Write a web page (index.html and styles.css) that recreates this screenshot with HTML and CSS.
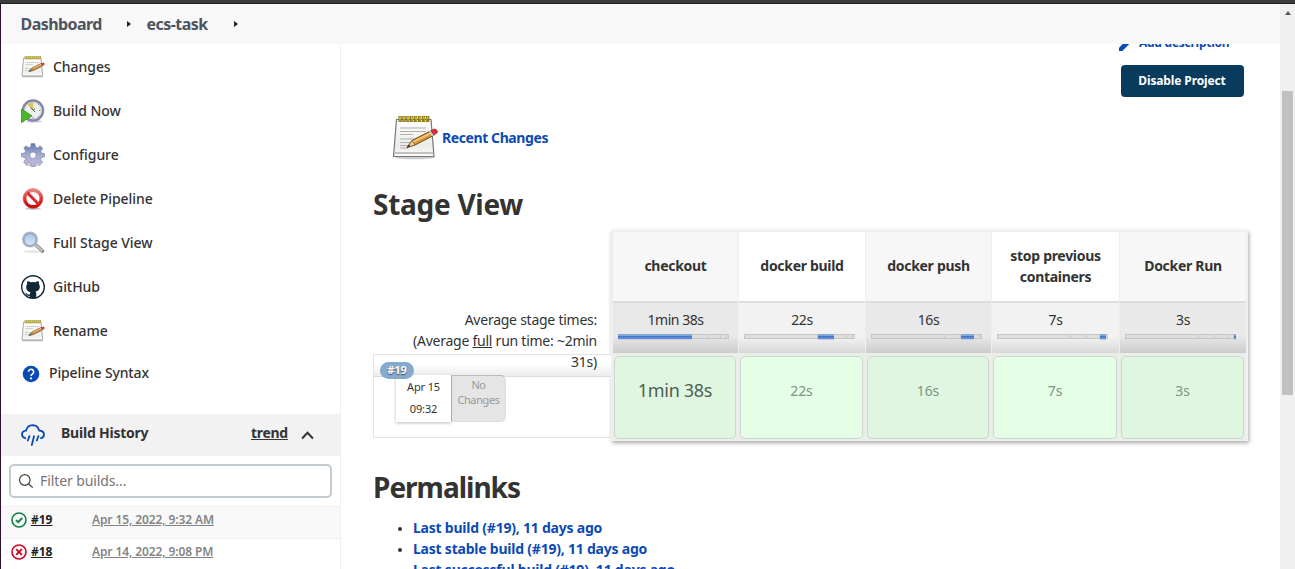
FILE: index.html
```html
<!DOCTYPE html>
<html lang="en">
<head>
<meta charset="utf-8">
<title>ecs-task [Jenkins]</title>
<link rel="stylesheet" href="styles.css">
</head>
<body>
<svg width="0" height="0" class="defs" aria-hidden="true">
  <defs>
    <linearGradient id="paper" x1="0" y1="0" x2="0" y2="1"><stop offset="0" stop-color="#fff"/><stop offset=".7" stop-color="#ececea"/><stop offset="1" stop-color="#fafafa"/></linearGradient>
    <linearGradient id="steel" x1="0" y1="0" x2="0" y2="1"><stop offset="0" stop-color="#5f7cab"/><stop offset=".5" stop-color="#a5acd0"/><stop offset="1" stop-color="#c3bbda"/></linearGradient>
    <linearGradient id="red" x1="0" y1="0" x2="0" y2="1"><stop offset="0" stop-color="#e98484"/><stop offset=".6" stop-color="#dd2a2a"/><stop offset="1" stop-color="#c40c10"/></linearGradient>
    <linearGradient id="lens" x1="0" y1="0" x2="0" y2="1"><stop offset="0" stop-color="#a3c4ea"/><stop offset="1" stop-color="#dcecfb"/></linearGradient>
    <symbol id="notepad" viewBox="0 0 48 48">
      <ellipse cx="23" cy="44.500" rx="20" ry="1.800" fill="#ccc"/>
      <path d="M4.500 6.500H39L42 43.500H1.500Z" fill="url(#paper)" stroke="#777" stroke-width="1.200" stroke-linejoin="round"/>
      <path d="M2.500 40H41.500" stroke="#b0b0ae" stroke-width="1.500"/>
      <path d="M8 15H34M8 18.500H34M8 21.500H21M8 26H32M8 29.500H26M8 32.500H22M8 35H16" stroke="#aeb0ae" stroke-width="1.100"/>
      <path d="M6.500 6H38" stroke="#6d5d08" stroke-width="6" stroke-dasharray="3.200 .7"/>
      <path d="M7.200 6H38" stroke="#dcc640" stroke-width="5" stroke-dasharray="2 1.900"/>
      <path d="M7.800 7H38" stroke="#705f0c" stroke-width="2.500" stroke-dasharray=".8 3.100"/>
      <path d="M15 34.500L20 27.500L38.500 18L41.500 22.500L23 32Z" fill="#d69a3b" stroke="#6e4715"/>
      <path d="M21 29L39 20" stroke="#f3c779" stroke-width="1.600"/>
      <path d="M15 34.500L20 27.500L23 32Z" fill="#e6c99c" stroke="#6e4715" stroke-width=".6"/>
      <path d="M15 34.500L17 31.500L18.200 33.300Z" fill="#222"/>
      <path d="M37 18.700L40 23.200L42 22L39 17.500Z" fill="#ccc"/>
      <path d="M39 17.700L42 16Q45.500 16 45.500 19.500L42 22Z" fill="#e02d32" stroke="#8e2025" stroke-width=".7"/>
    </symbol>
    <symbol id="notepad-small" viewBox="0 0 24 24">
      <path d="M2.500 3H20L21.700 21H1Z" fill="url(#paper)" stroke="#a5a5a3" stroke-width=".9"/>
      <path d="M1.300 21.500H22" stroke="#b4b4b2" stroke-width="1.500"/>
      <path d="M4.500 7.500H17.500M4.500 9.500H12M4 13.500H11M4 15.500H8" stroke="#d0d1d0"/>
      <path d="M3.500 2.700H20" stroke="#b4a84a" stroke-width="3.200"/>
      <path d="M4 2.200H20" stroke="#ddd06b" stroke-width="1.500" stroke-dasharray="1 1"/>
      <path d="M8 16.500L11 13L21 8L22 10.500L12.500 15.500Z" fill="#c88f42" stroke="#745023" stroke-width=".7"/>
      <path d="M12 13.500L20 9.500" stroke="#f0c77c"/>
      <path d="M8 16.500L9.400 14.800L10.200 16Z" fill="#333"/>
      <path d="M20 8.500L22.500 7.500Q24 8.500 23.500 9.700L21.500 10.700Z" fill="#dc343a"/>
    </symbol>
  </defs>
</svg>
<div class="window">
  <div class="chrome"></div>
  <div class="viewport">
    <div class="page">
      <nav class="crumbs">
        <a class="crumb crumb-root">Dashboard</a><i class="caret"></i><a class="crumb crumb-job">ecs-task</a><i class="caret"></i>
      </nav>
      <div class="columns">
        <aside class="side">
          <div class="task"><svg class="ico"><use href="#notepad-small"/></svg><span>Changes</span></div>
          <div class="task"><svg class="ico" viewBox="0 0 24 24">
            <ellipse cx="13" cy="22.300" rx="8" ry="1.200" fill="#ccc"/>
            <circle cx="12" cy="11.500" r="10" fill="#eef0ee" stroke="#8585a8" stroke-width="2.400"/>
            <circle cx="12" cy="11.500" r="8.300" fill="none" stroke="#cfd0dd"/>
            <path d="M12 11.500L6.500 5.500Q9 3 12.500 3.500Z" fill="#dfc45c"/>
            <path d="M9.500 8.500L12.500 11.500L13.500 9.500M12.500 11.500L14 13" stroke="#555" stroke-width="1" fill="none"/>
            <path d="M18 11.500H19.500M12 18V19.500M17 6l.7-.7M17 17l.7.7" stroke="#888"/>
            <path d="M.5 10L11 16.800L.5 23.700Z" fill="#4db528" stroke="#3d942a" stroke-width=".8"/></svg><span>Build Now</span></div>
          <div class="task"><svg class="ico" viewBox="0 0 24 24">
            <ellipse cx="12" cy="22" rx="8" ry="1.300" fill="#ccc"/>
            <path fill-rule="evenodd" fill="url(#steel)" stroke="#7c83ab" stroke-width=".7" d="M10.200.6h3.600l.7 3.500 1.800.8 3-2 2.400 2.500-2 2.900.7 1.800 3.100.6v3l-3.300.8-.7 1.700 2 3-2.400 2.400-3-2-1.600.7-.7 3.200h-3.300l-.8-3.200-1.800-.8-2.900 2-2.300-2.400 1.900-2.900-.7-1.700L.5 13.700v-3.200l3.500-.7.7-1.800-1.900-2.900L5 2.900l3 1.900 1.600-.7zM12 9a3.200 3.200 0 1 0 0 6.400A3.200 3.200 0 1 0 12 9z"/></svg><span>Configure</span></div>
          <div class="task"><svg class="ico" viewBox="0 0 24 24">
            <ellipse cx="12" cy="21.700" rx="8" ry="1.200" fill="#ccc"/>
            <circle cx="12" cy="11.500" r="8.300" fill="#fff" stroke="url(#red)" stroke-width="3.400"/>
            <path d="M6.300 5.800L17.700 17.200" stroke="#dc2b2d" stroke-width="3"/>
            <circle cx="12" cy="11.500" r="10" fill="none" stroke="#c8595b" stroke-width=".5"/></svg><span>Delete Pipeline</span></div>
          <div class="task"><svg class="ico" viewBox="0 0 24 24">
            <ellipse cx="12" cy="20.500" rx="10" ry="1.500" fill="#e7e7e7"/>
            <path d="M14.500 13.500L21.500 20" stroke="#858585" stroke-width="3.600" stroke-linecap="round"/>
            <path d="M14.500 13.500L21.500 20" stroke="#c4c4c2" stroke-width="2"/>
            <circle cx="9" cy="8.500" r="6.900" fill="url(#lens)" stroke="#b4b8c0" stroke-width="2.200"/>
            <circle cx="9" cy="8.500" r="6" fill="none" stroke="#6a90c0" stroke-width=".7"/></svg><span>Full Stage View</span></div>
          <div class="task"><svg class="ico" viewBox="0 0 24 24">
            <circle cx="12" cy="12" r="11.300" fill="#fff" stroke="#142b3a" stroke-width="1.400"/>
            <path fill="#102838" d="M6.300 6.200q1.500-.2 3.300 1.100 2.400-.6 4.800 0 1.800-1.300 3.300-1.100.5 1.300.1 2.500 1.300 1.500 1 3.600-.4 3.700-4.300 4.100.8.800.8 2.300V23.300H8.700V20.800Q6 21.300 5 18.900l-1-1.200q1.300-.2 2.300 1.200 1 1 2.500.5.100-1.600.8-2.200-4-.6-4.400-4.200-.3-2.400 1-3.900-.5-1.400.1-2.900z"/></svg><span>GitHub</span></div>
          <div class="task"><svg class="ico"><use href="#notepad-small"/></svg><span>Rename</span></div>
          <div class="task task-help"><svg class="ico-help" viewBox="0 0 18 18"><circle cx="9" cy="9" r="8.300" fill="#0b4ab5"/><path d="M6.400 6.800a2.600 2.600 0 1 1 4.200 2.100q-1.500 1-1.500 2.200" fill="none" stroke="#fff" stroke-width="1.600"/><circle cx="9" cy="13.400" r="1.100" fill="#fff"/></svg><span>Pipeline Syntax</span></div>
          <div class="history-head">
            <svg class="weather" viewBox="0 0 24 24" fill="none" stroke="#0b4ab5" stroke-width="1.800" stroke-linecap="round"><path d="M4.200 15.200Q.8 14 1 11.200 1.300 8 5 7.700 6.500 2.300 11.700 2.200 16.800 2.300 18.200 7.500 22.800 7.800 23 11.500 23 14.400 20 15.200"/><path d="M8.500 13.200L6.800 17.500M13 13.200L10.800 22M17.500 13.200L15.800 17.500"/></svg>
            <span class="history-title">Build History</span><a class="trend">trend</a>
            <svg class="chev" viewBox="0 0 12 8"><path d="M1 6.800L6 1.500L11 6.800" fill="none" stroke="#333" stroke-width="1.800"/></svg>
          </div>
          <div class="filter"><svg viewBox="0 0 16 16" fill="none" stroke="#444" stroke-width="1.200"><circle cx="6.800" cy="7" r="5.300"/><path d="M10.700 11L14.300 14.300" stroke-linecap="round"/></svg><span>Filter builds...</span></div>
          <div class="build odd"><svg class="status" viewBox="0 0 16 16" fill="none" stroke="#13804a" stroke-width="1.600"><circle cx="8" cy="8" r="7"/><path d="M5 8.100L7.200 10.200L11.200 6" stroke-width="1.900"/></svg><a class="num">#19</a><a class="date">Apr 15, 2022, 9:32 AM</a></div>
          <div class="build"><svg class="status" viewBox="0 0 16 16" fill="none" stroke="#d0021b" stroke-width="1.600"><circle cx="8" cy="8" r="7"/><path d="M5.200 5.200L10.800 10.800M10.800 5.200L5.200 10.800" stroke-width="1.900"/></svg><a class="num">#18</a><a class="date">Apr 14, 2022, 9:08 PM</a></div>
        </aside>
        <main class="main">
          <div class="describe"><svg viewBox="0 0 12 12"><path d="M0 12V8.700L8 .7L11.300 4L3.300 12Z" fill="#0b4ab5"/></svg><span>Add description</span></div>
          <div class="actions"><button class="disable">Disable Project</button></div>
          <div class="recent"><svg class="ico-big"><use href="#notepad"/></svg><a>Recent Changes</a></div>
          <h2 class="stage-title">Stage View</h2>
          <section class="stages">
            <div class="legend">
              <div class="average">Average stage times:<br>(Average <u>full</u> run time: ~2min<br>31s)</div>
              <div class="run">
                <div class="run-band"></div>
                <span class="badge">#19</span>
                <div class="run-info"><div class="when">Apr 15<br>09:32</div><div class="changes">No<br>Changes</div></div>
              </div>
            </div>
            <div class="grid">
              <div class="stage shade"><div class="name">checkout</div><div class="avg">1min 38s<div class="bar"><i class="w1 on"></i><i class="w2"></i><i class="w3"></i><i class="w4"></i><i class="w5"></i></div></div><div class="cell"><div class="result long">1min 38s</div></div></div>
              <div class="stage"><div class="name">docker build</div><div class="avg">22s<div class="bar"><i class="w1"></i><i class="w2 on"></i><i class="w3"></i><i class="w4"></i><i class="w5"></i></div></div><div class="cell"><div class="result">22s</div></div></div>
              <div class="stage shade"><div class="name">docker push</div><div class="avg">16s<div class="bar"><i class="w1"></i><i class="w2"></i><i class="w3 on"></i><i class="w4"></i><i class="w5"></i></div></div><div class="cell"><div class="result">16s</div></div></div>
              <div class="stage"><div class="name">stop previous<br>containers</div><div class="avg">7s<div class="bar"><i class="w1"></i><i class="w2"></i><i class="w3"></i><i class="w4 on"></i><i class="w5"></i></div></div><div class="cell"><div class="result">7s</div></div></div>
              <div class="stage shade"><div class="name">Docker Run</div><div class="avg">3s<div class="bar"><i class="w1"></i><i class="w2"></i><i class="w3"></i><i class="w4"></i><i class="w5 on"></i></div></div><div class="cell"><div class="result">3s</div></div></div>
            </div>
          </section>
          <h2 class="links-title">Permalinks</h2>
          <ul class="links"><li><a>Last build (#19), 11 days ago</a></li><li><a>Last stable build (#19), 11 days ago</a></li><li><a>Last successful build (#19), 11 days ago</a></li></ul>
        </main>
      </div>
    </div>
    <div class="scrollbar"><i class="up"></i><div class="thumb"></div></div>
  </div>
</div>
</body>
</html>
```
FILE: styles.css
```css
*{box-sizing:border-box}
body{margin:0;width:1295px;height:569px;overflow:hidden;font:14px/21px "Noto Sans",sans-serif;color:#333;background:#fff}
.defs{position:absolute}
.window{height:569px;display:flex;flex-direction:column;overflow:hidden}
.chrome{height:4px;flex:none;background:#3b3b3b;border-bottom:1px solid #202020}
.viewport{flex:1;min-height:0;display:flex}
.page{flex:1;min-width:0;display:flex;flex-direction:column;border-left:1px solid #2a1230}
.crumbs{height:40px;flex:none;background:#f8f8f8;display:flex;align-items:center;padding-left:19.500px;color:#4d545d;font-size:16px;font-weight:700;letter-spacing:-.55px}
.crumb-root{width:106px}
.caret{width:0;height:0;border:3.500px solid transparent;border-left:4px solid #222;border-right:0}
.crumb-job{margin-left:16px;width:86px}
.crumb-job+.caret{margin-left:1px}
.columns{flex:1;min-height:0;display:flex;overflow:hidden}
.side{width:340px;flex:none;border-right:1px solid #efefef;padding-top:1px;overflow:hidden}
.task{height:44px;display:flex;align-items:center;padding-left:20px;gap:8px;font-weight:500;letter-spacing:-.05px}
.task span{margin-top:-2px}
.ico{width:24px;height:24px}
.task-help{height:40px;gap:9px;padding-left:21px;letter-spacing:-.13px}
.ico-help{width:18px;height:18px;margin-top:1px}
.history-head{margin-top:21px;height:42px;background:#f2f2f2;display:flex;align-items:center;padding-left:20px;font-weight:700;letter-spacing:-.22px}
.weather{width:24px;height:24px}
.history-title{width:190px;margin:-6px 0 0 16px}
.trend{margin-top:-6px;width:37px;text-decoration:underline;letter-spacing:-.3px}
.chev{width:13px;height:9px;margin-left:13px}
.filter{margin:8px 8px 8px;height:34px;border:2px solid #c1cbd1;border-radius:5px;display:flex;align-items:center;padding-left:7px;gap:6px;color:#757575;letter-spacing:-.1px}
.filter svg{width:16px;height:16px}
.filter span{margin-top:-2px}
.build{height:32px;border-top:1px solid #f0f0f0;display:flex;align-items:center;padding:0 0 4px 10px;font-size:12px;line-height:17px;font-weight:600}
.build.odd{background:#f8f8f8}
.build a{text-decoration:underline;margin-top:-2px}
.status{width:16px;height:16px;margin-top:-1px}
.build .num{margin-left:4px;width:61px;color:#222;font-weight:700}
.date{color:#858585;letter-spacing:-.11px}
.main{flex:1;min-width:0;padding-left:32px}
.describe{height:21px;margin-top:-12px;display:flex;align-items:center;padding-left:746px;gap:8px;color:#0b4ab5;font-size:12px;font-weight:700;letter-spacing:-.26px}
.describe svg{width:12px;height:12px;margin-top:4px}
.describe span{margin-top:-1px}
.actions{padding:12px 36px 0 0;display:flex;justify-content:flex-end}
.disable{width:123px;height:32px;border:0;border-radius:4px;background:#083b5c;color:#fff;font:700 12px/16px "Noto Sans",sans-serif;letter-spacing:-.12px;padding:0 1px 1px 0}
.recent{height:48px;margin:16px 0 0 19px;display:flex;align-items:center;gap:2px;color:#0b4ab5;font-weight:700;letter-spacing:-.41px}
.ico-big{width:48px;height:48px}
h2{margin:0;font-size:28px;line-height:36px;font-weight:700;letter-spacing:-.27px}
.stage-title{margin-top:25px}
.stages{margin-top:8px;display:flex}
.legend{width:238px;flex:none;padding-top:79px}
.average{text-align:right;padding-right:14px;letter-spacing:-.25px;height:45px;position:relative;z-index:2}
.run{position:relative;height:84px;border:1px solid #e4e4e4;border-right-width:0}
.run-band{height:22px;background:linear-gradient(#fff 40%,#ececec);border-bottom:1px solid #ddd}
.badge{position:absolute;left:6px;top:7px;width:34px;height:17px;border-radius:9px;background:#86a9ce;color:#fff;text-shadow:0 1px 1px #345;font:700 11px/16px "Noto Sans",sans-serif;text-align:center;z-index:2}
.run-info{display:flex;margin:-2px 0 0 22px;font-size:11px}
.when{width:55px;height:47px;padding-top:1px;text-align:center;line-height:22px;background:#fff;letter-spacing:-.13px;box-shadow:0 1px 3px #bbb}
.changes{width:55px;height:47px;padding-top:1px;text-align:center;line-height:15px;color:#999;background:#e5e5e5;border:1px solid #ddd;border-top:1px solid #bbb;border-left:1px solid #aaa;border-radius:0 5px 5px 0;letter-spacing:-.4px}
.grid{width:637px;height:211px;border:2px solid #f0f0f0;border-left-width:1px;border-top-width:1px;display:grid;grid-template-columns:126px 127px 126px 128px 127px;box-shadow:1px 2px 4px #aaa}
.stage{display:flex;flex-direction:column;border-left:1px solid #eee;text-align:center}
.name{height:72px;display:flex;align-items:center;justify-content:center;padding-bottom:2px;font-weight:700;letter-spacing:-.3px;border-bottom:2px solid #ddd;border-top:1px solid #f0f0f0}
.avg{height:50px;padding-top:6px;background:linear-gradient(#f2f2f2 68%,#d8d8d8);letter-spacing:-.45px}
.shade .name{background:#f7f7f7}
.shade .avg{background:linear-gradient(#e9e9e9 65%,#ccc)}
.bar{display:flex;width:111px;height:5px;margin:4px 0 0 5px}
.bar i{height:5px;background:#dedede;border:1px solid #c6c6c6;border-left-width:0;border-right-color:#c9c9c9}
.bar .w1{width:74px;border-left-width:1px}.bar .w2{width:16px}.bar .w3{width:13px}.bar .w4{width:6px}.bar .w5{width:2px}
.bar .on{border:0;background:linear-gradient(#82a9d4 50%,#4779ca 50%,#6997df);box-shadow:0 1px 1px #ccd}
.cell{flex:1;padding:3px 2px 1px 1px;background:#e9eee9}
.result{height:83px;border:1px solid #cfd6cf;border-radius:5px;background:#e5ffe7;color:#7f9481;line-height:67px;letter-spacing:-.1px}
.shade .result{background:#dff6e1}
.result.long{font-size:18px;color:#4f5f51;letter-spacing:-.3px}
.links-title{margin-top:28px;letter-spacing:-1px}
.links{margin:12px 0 0;padding-left:40px;color:#333}
.links li::marker{font-size:11px}
.links a{color:#0b4ab5;font-weight:700;letter-spacing:-.22px}
.scrollbar{width:15px;background:#f0f0f0;padding:7px 2px 0;display:flex;flex-direction:column;align-items:center}
.up{border:3.500px solid transparent;border-bottom:4px solid #555;border-top:0}
.thumb{width:11px;height:304px;margin-top:76px;background:#c1c1c1}
```
